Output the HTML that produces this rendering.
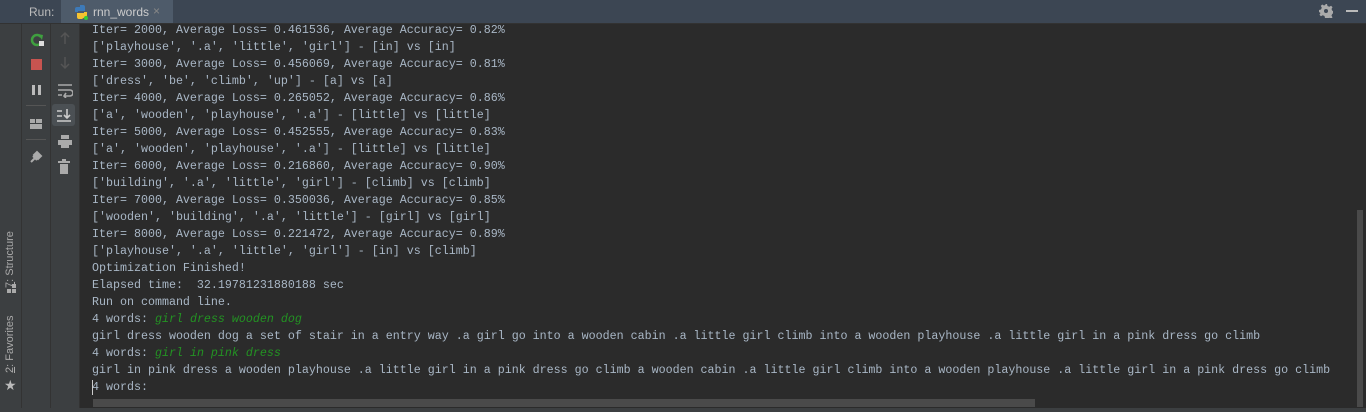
<!DOCTYPE html>
<html><head><style>
body{margin:0;width:1366px;height:412px;background:#2b2b2b;overflow:hidden;position:relative;font-family:"Liberation Sans",sans-serif}
.hdr{position:absolute;left:0;top:0;width:1366px;height:23px;background:#3c4653;border-bottom:1px solid #323232}
.side{position:absolute;left:0;top:24px;width:21px;height:388px;background:#3c3f41;border-right:1px solid #333}
.c1{position:absolute;left:22px;top:24px;width:28px;height:388px;background:#3c3f41;border-right:1px solid #333}
.c2{position:absolute;left:51px;top:24px;width:28px;height:388px;background:#3c3f41;border-right:1px solid #333}
.con{position:absolute;left:92px;top:22px;font-family:"Liberation Mono",monospace;font-size:11.67px;line-height:17px;color:#a9b7c6;white-space:pre}
.g{color:#239323;font-style:italic}
.ic{position:absolute}
</style></head><body>
<div class="hdr">
<span style="position:absolute;left:29px;top:5px;font-size:12px;color:#bbb">Run:</span>
<div style="position:absolute;left:61px;top:0;width:112px;height:23px;background:#4e5b6a"></div>
<svg class="ic" style="left:73px;top:4px" width="16" height="16"><path d="M7 1h3a2 2 0 0 1 2 2v4H5v1H2V5a2 2 0 0 1 2-2h3z" fill="#3d7ab8"/><path d="M9 15H6a2 2 0 0 1-2-2V9h7V8h3v3a2 2 0 0 1-2 2z" fill="#f5c331"/><circle cx="13" cy="14" r="2" fill="#3c3"/></svg>
<span style="position:absolute;left:93px;top:5px;font-size:12px;color:#ccc">rnn_words</span>
<span style="position:absolute;left:153px;top:4px;font-size:12px;color:#888">×</span>
<svg class="ic" style="left:1319px;top:4px" width="14" height="14"><path d="M6 0h2l.5 2 1.8.8 1.8-1 1.4 1.4-1 1.8.8 1.8 2 .5v2l-2 .5-.8 1.8 1 1.8-1.4 1.4-1.8-1-1.8.8L8 14H6l-.5-2-1.8-.8-1.8 1-1.4-1.4 1-1.8L.8 8.5 0 8V6l2-.5.8-1.8-1-1.8L3.2.5l1.8 1 1.8-.8z" fill="#aaa"/><circle cx="7" cy="7" r="2" fill="#3c4653"/></svg>
<div style="position:absolute;left:1346px;top:10px;width:12px;height:2px;background:#bbb"></div>
</div>
<div class="side">
<div style="position:absolute;left:4px;top:264px;transform:rotate(-90deg);transform-origin:0 0;font-size:11px;color:#aaa;white-space:nowrap"><u>7</u>: Structure</div>
<div style="position:absolute;left:7px;top:265px;width:4px;height:4px;background:#aaa"></div>
<div style="position:absolute;left:12px;top:265px;width:4px;height:4px;background:#aaa"></div>
<div style="position:absolute;left:12px;top:260px;width:4px;height:4px;background:#aaa"></div>
<div style="position:absolute;left:4px;top:349px;transform:rotate(-90deg);transform-origin:0 0;font-size:11px;color:#aaa;white-space:nowrap"><u>2</u>: Favorites</div>
<div style="position:absolute;left:4px;top:354px;font-size:14px;line-height:14px;color:#bbb">★</div>
</div>
<div class="c1">
<svg class="ic" style="left:7px;top:8px" width="16" height="16"><path d="M12 5A5 5 0 1 0 12 11" fill="none" stroke="#3f9f3f" stroke-width="2.5"/><path d="M9 2l5 1-1 5z" fill="#3f9f3f"/><rect x="10" y="9" width="5" height="5" fill="#ddd"/></svg>
<div style="position:absolute;left:9px;top:35px;width:11px;height:11px;background:#c75450"></div>
<div style="position:absolute;left:10px;top:61px;width:3px;height:10px;background:#bbb"></div>
<div style="position:absolute;left:16px;top:61px;width:3px;height:10px;background:#bbb"></div>
<div style="position:absolute;left:4px;top:81px;width:20px;height:1px;background:#555"></div>
<div style="position:absolute;left:8px;top:95px;width:12px;height:10px;background:#aaa"></div>
<div style="position:absolute;left:8px;top:99px;width:12px;height:1px;background:#3c3f41"></div>
<div style="position:absolute;left:13px;top:95px;width:1px;height:4px;background:#3c3f41"></div>
<div style="position:absolute;left:4px;top:115px;width:20px;height:1px;background:#555"></div>
<svg class="ic" style="left:6px;top:124px" width="16" height="16"><path d="M3 14l4-4M6 7l3-3 4 4-3 3z M5 8l4 4" stroke="#aaa" stroke-width="2" fill="#aaa"/></svg>
</div>
<div class="c2">
<svg class="ic" style="left:7px;top:7px" width="14" height="14"><path d="M7 2v11M3 6l4-4 4 4" stroke="#555" stroke-width="1.5" fill="none"/></svg>
<svg class="ic" style="left:7px;top:32px" width="14" height="14"><path d="M7 1v11M3 8l4 4 4-4" stroke="#555" stroke-width="1.5" fill="none"/></svg>
<svg class="ic" style="left:6px;top:58px" width="16" height="16"><path d="M1 3h14M1 8h12a3 3 0 0 1 0 6H7M9 11l-2 3 2 2M1 13h4" stroke="#aaa" stroke-width="1.6" fill="none"/></svg>
<div style="position:absolute;left:1px;top:80px;width:23px;height:22px;background:#4b5054;border-radius:3px"></div>
<svg class="ic" style="left:5px;top:84px" width="16" height="16"><path d="M1 3h5M1 8h5M1 13h14M11 1v9M8 7l3 3 3-3" stroke="#ccc" stroke-width="1.6" fill="none"/></svg>
<svg class="ic" style="left:6px;top:111px" width="16" height="14"><rect x="4" y="0" width="8" height="4" fill="#aaa"/><rect x="1" y="5" width="14" height="5" fill="#aaa"/><rect x="4" y="10" width="8" height="3" fill="#aaa"/></svg>
<svg class="ic" style="left:7px;top:135px" width="14" height="16"><rect x="0" y="2" width="12" height="2" fill="#aaa"/><rect x="4" y="0" width="4" height="2" fill="#aaa"/><rect x="2" y="5" width="8" height="10" fill="#aaa"/></svg>
</div>
<div class="con">Iter= 2000, Average Loss= 0.461536, Average Accuracy= 0.82%
['playhouse', '.a', 'little', 'girl'] - [in] vs [in]
Iter= 3000, Average Loss= 0.456069, Average Accuracy= 0.81%
['dress', 'be', 'climb', 'up'] - [a] vs [a]
Iter= 4000, Average Loss= 0.265052, Average Accuracy= 0.86%
['a', 'wooden', 'playhouse', '.a'] - [little] vs [little]
Iter= 5000, Average Loss= 0.452555, Average Accuracy= 0.83%
['a', 'wooden', 'playhouse', '.a'] - [little] vs [little]
Iter= 6000, Average Loss= 0.216860, Average Accuracy= 0.90%
['building', '.a', 'little', 'girl'] - [climb] vs [climb]
Iter= 7000, Average Loss= 0.350036, Average Accuracy= 0.85%
['wooden', 'building', '.a', 'little'] - [girl] vs [girl]
Iter= 8000, Average Loss= 0.221472, Average Accuracy= 0.89%
['playhouse', '.a', 'little', 'girl'] - [in] vs [climb]
Optimization Finished!
Elapsed time:  32.19781231880188 sec
Run on command line.
4 words: <span class="g">girl dress wooden dog</span>
girl dress wooden dog a set of stair in a entry way .a girl go into a wooden cabin .a little girl climb into a wooden playhouse .a little girl in a pink dress go climb
4 words: <span class="g">girl in pink dress</span>
girl in pink dress a wooden playhouse .a little girl in a pink dress go climb a wooden cabin .a little girl climb into a wooden playhouse .a little girl in a pink dress go climb
4 words:</div>
<div style="position:absolute;left:92px;top:380px;width:1px;height:15px;background:#ccc"></div>
<div style="position:absolute;left:93px;top:399px;width:942px;height:8px;background:#4a4a4a"></div>
<div style="position:absolute;left:1357px;top:210px;width:6px;height:197px;background:#4a4a4a"></div>
<div style="position:absolute;left:0;top:408px;width:1366px;height:4px;background:#3c3f41"></div>
</body></html>
